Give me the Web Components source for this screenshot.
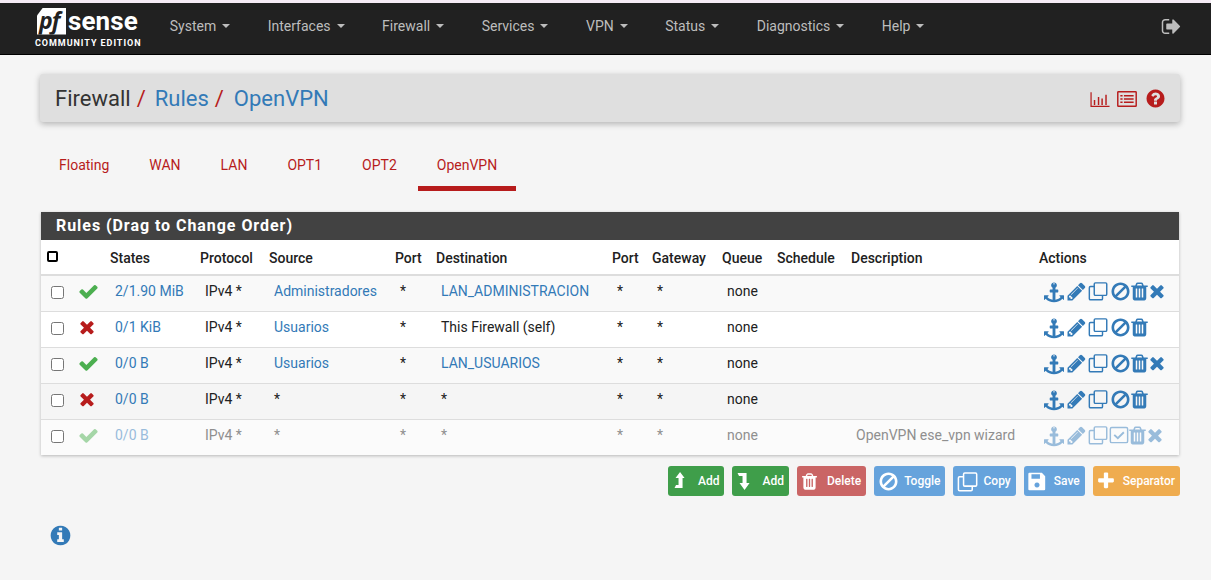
<!DOCTYPE html>
<html lang="en">
<head>
<meta charset="utf-8">
<title>pfSense - Firewall: Rules: OpenVPN</title>
<style>
  html, body { margin: 0; padding: 0; }
  body {
    background: #f5f5f5;
    color: #212121;
    font: 14px/20px Roboto, "Liberation Sans", sans-serif;
    border-top: 3px solid #f6ecf6;
    height: 577px;
    overflow: hidden;
  }
  .wrap { display: flex; flex-direction: column; padding: 19px 31px 0 40px; }
  .rows { --cols: 34px 30px 90px 69px 126px 41px 176px 40px 70px 55px 74px 188px 145px; }
</style>
</head>
<body>
<pf-navbar>
  <pf-nav-item>System</pf-nav-item>
  <pf-nav-item>Interfaces</pf-nav-item>
  <pf-nav-item>Firewall</pf-nav-item>
  <pf-nav-item>Services</pf-nav-item>
  <pf-nav-item>VPN</pf-nav-item>
  <pf-nav-item>Status</pf-nav-item>
  <pf-nav-item>Diagnostics</pf-nav-item>
  <pf-nav-item>Help</pf-nav-item>
</pf-navbar>
<div class="wrap">
  <pf-breadcrumb></pf-breadcrumb>
  <pf-tabs>
    <pf-tab>Floating</pf-tab>
    <pf-tab>WAN</pf-tab>
    <pf-tab>LAN</pf-tab>
    <pf-tab>OPT1</pf-tab>
    <pf-tab>OPT2</pf-tab>
    <pf-tab active>OpenVPN</pf-tab>
  </pf-tabs>
  <pf-panel heading="Rules (Drag to Change Order)" class="rows">
    <pf-rule-head></pf-rule-head>
    <pf-rule-row tint="#f9f9f9" status="ok" states="2/1.90 MiB" source="Administradores" dest="LAN_ADMINISTRACION" dest-link actions="anchor pencil clone ban trash times"></pf-rule-row>
    <pf-rule-row tint="#ffffff" status="no" states="0/1 KiB" source="Usuarios" dest="This Firewall (self)" actions="anchor pencil clone ban trash"></pf-rule-row>
    <pf-rule-row tint="#f9f9f9" status="ok" states="0/0 B" source="Usuarios" dest="LAN_USUARIOS" dest-link actions="anchor pencil clone ban trash times"></pf-rule-row>
    <pf-rule-row tint="#f5f5f5" status="no" states="0/0 B" source="*" plain-source dest="*" actions="anchor pencil clone ban trash"></pf-rule-row>
    <pf-rule-row tint="#fbfbfb" disabled status="ok" states="0/0 B" source="*" plain-source dest="*" desc="OpenVPN ese_vpn wizard" actions="anchor pencil clone check trash times"></pf-rule-row>
  </pf-panel>
  <pf-button-bar>
    <pf-button color="#3f9e4a" icon="levelup" iw="11" is="18" gap="14" rpad="5">Add</pf-button>
    <pf-button color="#3f9e4a" icon="leveldown" iw="11" is="18" gap="14" rpad="5">Add</pf-button>
    <pf-button color="#ca6565" icon="trash" iw="16" is="19" gap="9" rpad="5">Delete</pf-button>
    <pf-button color="#66a3dc" icon="ban" iw="18" is="21" gap="7" rpad="4">Toggle</pf-button>
    <pf-button color="#66a3dc" icon="clone" iw="19" is="21" gap="7" rpad="5">Copy</pf-button>
    <pf-button color="#66a3dc" icon="save" iw="17" is="20" gap="8" rpad="5">Save</pf-button>
    <pf-button color="#efac4f" icon="plus" iw="16" is="20" gap="9" rpad="5">Separator</pf-button>
  </pf-button-bar>
  <pf-info></pf-info>
</div>

<script>
// font-awesome 4 outlines, all in a 1792 box
const ICONS = {
  times: 'M1490 1322q0 40-28 68l-136 136q-28 28-68 28t-68-28l-294-294-294 294q-28 28-68 28t-68-28l-136-136q-28-28-28-68t28-68l294-294-294-294q-28-28-28-68t28-68l136-136q28-28 68-28t68 28l294 294 294-294q28-28 68-28t68 28l136 136q28 28 28 68t-28 68l-294 294 294 294q28 28 28 68z',
  ok: 'M1671 566q0 40-28 68l-724 724-136 136q-28 28-68 28t-68-28l-136-136-362-362q-28-28-28-68t28-68l136-136q28-28 68-28t68 28l294 295 656-657q28-28 68-28t68 28l136 136q28 28 28 68z',
  pencil: 'M491 1536l91-91-235-235-91 91v107h128v128h107zm523-928q0-22-22-22-10 0-17 7l-542 542q-7 7-7 17 0 22 22 22 10 0 17-7l542-542q7-7 7-17zm-54-192l416 416-832 832h-416v-416zm683 96q0 53-37 90l-166 166-416-416 166-165q36-38 90-38 53 0 91 38l235 234q37 39 37 91z',
  trash: 'M704 1376v-704q0-14-9-23t-23-9h-64q-14 0-23 9t-9 23v704q0 14 9 23t23 9h64q14 0 23-9t9-23zm256 0v-704q0-14-9-23t-23-9h-64q-14 0-23 9t-9 23v704q0 14 9 23t23 9h64q14 0 23-9t9-23zm256 0v-704q0-14-9-23t-23-9h-64q-14 0-23 9t-9 23v704q0 14 9 23t23 9h64q14 0 23-9t9-23zm-544-992h448l-48-117q-7-9-17-11h-317q-10 2-17 11zm928 32v64q0 14-9 23t-23 9h-96v948q0 83-47 143.5t-113 60.5h-832q-66 0-113-58.5t-47-141.5v-952h-96q-14 0-23-9t-9-23v-64q0-14 9-23t23-9h309l70-167q15-37 54-63t79-26h320q40 0 79 26t54 63l70 167h309q14 0 23 9t9 23z',
  ban: 'M1440 893q0-161-87-295l-754 753q137 89 297 89 111 0 211.5-43.5t173.5-116.5 116-174.5 43-212.5zm-999 299l755-754q-135-91-300-91-148 0-273 73t-198 199-73 274q0 162 89 299zm1223-299q0 157-61 300t-163.5 246-245 164-298.5 61-298.5-61-245-164-163.5-246-61-300 61-299.5 163.5-245.5 245-164 298.5-61 298.5 61 245 164 163.5 245.5 61 299.5z',
  anchor: 'M960 256q0-26-19-45t-45-19-45 19-19 45 19 45 45 19 45-19 19-45zm832 1056v352q0 22-20 30-8 2-12 2-12 0-23-9l-93-93q-119 143-318.5 226.5t-429.5 83.5-429.5-83.5-318.5-226.5l-93 93q-9 9-23 9-4 0-12-2-20-8-20-30v-352q0-14 9-23t23-9h352q22 0 30 20 8 19-7 35l-100 100q67 91 189.5 153.5t271.5 82.5v-647h-192q-26 0-45-19t-19-45v-128q0-26 19-45t45-19h192v-163q-58-34-93-92.5t-35-128.5q0-106 75-181t181-75 181 75 75 181q0 70-35 128.5t-93 92.5v163h192q26 0 45 19t19 45v128q0 26-19 45t-45 19h-192v647q149-20 271.5-82.5t189.5-153.5l-100-100q-15-16-7-35 8-20 30-20h352q14 0 23 9t9 23z',
  plus: 'M1600 736v192q0 40-28 68t-68 28h-416v416q0 40-28 68t-68 28h-192q-40 0-68-28t-28-68v-416h-416q-40 0-68-28t-28-68v-192q0-40 28-68t68-28h416v-416q0-40 28-68t68-28h192q40 0 68 28t28 68v416h416q40 0 68 28t28 68z',
  question: 'M1024 1376v-192q0-14-9-23t-23-9h-192q-14 0-23 9t-9 23v192q0 14 9 23t23 9h192q14 0 23-9t9-23zm256-672q0-88-55.5-163t-138.5-116-170-41q-243 0-371 213-15 24 8 42l132 100q7 6 19 6 16 0 25-12 53-68 86-92 34-24 86-24 48 0 85.5 26t37.5 59q0 38-20 61t-68 45q-63 28-115.5 86.5t-52.5 125.5v36q0 14 9 23t23 9h192q14 0 23-9t9-23q0-19 21.5-49.5t54.5-49.5q32-18 49-28.5t46-35 44.5-48 28-60.5 12.5-81zm384 192q0 209-103 385.5t-279.5 279.5-385.5 103-385.5-103-279.5-279.5-103-385.5 103-385.5 279.5-279.5 385.5-103 385.5 103 279.5 279.5 103 385.5z',
  info: 'M1152 1376v-160q0-14-9-23t-23-9h-96v-512q0-14-9-23t-23-9h-320q-14 0-23 9t-9 23v160q0 14 9 23t23 9h96v320h-96q-14 0-23 9t-9 23v160q0 14 9 23t23 9h448q14 0 23-9t9-23zm-128-896v-160q0-14-9-23t-23-9h-192q-14 0-23 9t-9 23v160q0 14 9 23t23 9h192q14 0 23-9t9-23zm640 416q0 209-103 385.5t-279.5 279.5-385.5 103-385.5-103-279.5-279.5-103-385.5 103-385.5 279.5-279.5 385.5-103 385.5 103 279.5 279.5 103 385.5z',
  signout: 'M704 1440q0 4 1 20t.5 26.5-3 23.5-10 19.5-20.5 6.5h-320q-119 0-203.5-84.5t-84.5-203.5v-704q0-119 84.5-203.5t203.5-84.5h320q13 0 22.5 9.5t9.5 22.5q0 4 1 20t.5 26.5-3 23.5-10 19.5-20.5 6.5h-320q-66 0-113 47t-47 113v704q0 66 47 113t113 47h312l11.5 1 11.5 3 8 5.5 7 9 2 13.5zm928-544q0 26-19 45l-544 544q-19 19-45 19t-45-19-19-45v-288h-448q-26 0-45-19t-19-45v-384q0-26 19-45t45-19h448v-288q0-26 19-45t45-19 45 19l544 544q19 19 19 45z',
};
const SHAPES = {
  clone: '<g fill="none" stroke="currentColor" stroke-width="130"><rect x="560" y="170" width="1120" height="1120" rx="100"/><path d="M560 500H220a100 100 0 0 0-100 100v980a100 100 0 0 0 100 100h980a100 100 0 0 0 100-100v-290"/></g>',
  check: '<rect x="120" y="230" width="1550" height="1350" rx="130" fill="none" stroke="currentColor" stroke-width="130"/><path d="M470 880l320 310 540-540" fill="none" stroke="currentColor" stroke-width="170"/>',
  save: '<path fill="currentColor" fill-rule="evenodd" d="M220 160h1110l300 300v1170a100 100 0 0 1-100 100H220a100 100 0 0 1-100-100V260a100 100 0 0 1 100-100zM400 300v400h760V300zM896 1020a230 230 0 1 0 .1 0z"/>',
  levelup: '<path fill="currentColor" d="M1100 0L1550 600H1350V1600H550L700 1300H950V600H650z"/>',
  leveldown: '<path fill="currentColor" d="M350 100H1250V1100H1550L1050 1780 550 1100H850V400H500z"/>',
  chart: '<path fill="currentColor" d="M40 300h110v1200h1600v110H40zM340 980h130v450H340zM700 720h130v710H700zM1020 860h130v570h-130zM1370 520h130v910h-130z"/>',
  list: '<rect x="70" y="240" width="1650" height="1310" rx="60" fill="none" stroke="currentColor" stroke-width="130"/><path fill="currentColor" d="M300 530h200v150H300zM620 530h870v150H620zM300 820h200v150H300zM620 820h870v150H620zM300 1110h200v150H300zM620 1110h870v150H620z"/>',
};

class PfIcon extends HTMLElement {
  connectedCallback() {
    const name = this.getAttribute('name');
    const size = this.getAttribute('size') || 20;
    const color = this.getAttribute('color');
    const inner = SHAPES[name] || `<path fill="currentColor" d="${ICONS[name]}"/>`;
    this.attachShadow({ mode: 'open' }).innerHTML = `
      <style>
        :host { display: inline-flex; align-items: center; justify-content: center; ${color ? `color: ${color};` : ''} }
        svg { width: ${size}px; height: ${size}px; display: block; flex: none; overflow: visible; }
      </style>
      <svg viewBox="0 0 1792 1792" aria-hidden="true">${inner}</svg>`;
  }
}

class PfNavbar extends HTMLElement {
  constructor() {
    super();
    this.attachShadow({ mode: 'open' }).innerHTML = `
      <style>
        :host {
          display: flex; align-items: center; height: 52px; box-sizing: border-box;
          background: #212121; border-bottom: 1px solid #000;
          padding: 0 29px 0 35px;
        }
        .logo { display: block; width: 116px; flex: none; }
        .mark { display: flex; align-items: center; height: 27px; margin-top: -1px; }
        .pf {
          width: 29px; height: 27px; margin-left: 2px; background: #fff; color: #212121;
          clip-path: polygon(6px 0, 100% 0, 100% 100%, 0 100%, 0 8px);
          font: italic 700 23px/24px "Open Sans", sans-serif; letter-spacing: -1px; text-indent: 2px;
        }
        .sense { color: #fff; font: 700 26px/26px Roboto, sans-serif; margin-left: 2px; letter-spacing: .1px; }
        .ce { color: #fff; font: 700 9px/11px Roboto, sans-serif; letter-spacing: .95px; white-space: nowrap; margin-top: 3px; }
        .items { display: flex; flex: 1; margin-bottom: 5px; }
        pf-icon { color: #bdbdbd; margin-bottom: 5px; }
      </style>
      <div class="logo">
        <div class="mark"><span class="pf">pf</span><span class="sense">sense</span></div>
        <div class="ce">COMMUNITY EDITION</div>
      </div>
      <div class="items"><slot></slot></div>
      <pf-icon name="signout" size="21"></pf-icon>`;
  }
}

class PfNavItem extends HTMLElement {
  constructor() {
    super();
    this.attachShadow({ mode: 'open' }).innerHTML = `
      <style>
        :host { display: flex; align-items: center; padding: 0 18.75px; color: #bdbdbd; font-size: 14px; }
        i { display: block; width: 0; height: 0; margin-left: 6px; border: 4px solid transparent; border-top-color: currentColor; border-bottom: 0; }
      </style>
      <slot></slot><i></i>`;
  }
}

class PfBreadcrumb extends HTMLElement {
  constructor() {
    super();
    this.attachShadow({ mode: 'open' }).innerHTML = `
      <style>
        :host {
          display: flex; align-items: center; height: 48px; box-sizing: border-box; padding: 1px 14px 0 15px;
          background: #dfdfdf; border-radius: 3px;
          box-shadow: 0 2px 6px rgba(0,0,0,.28);
          font-size: 22px; color: #333;
        }
        .crumbs { flex: 1; display: flex; }
        a { color: #337ab7; margin-left: 9px; }
        a:last-child { margin-left: 10px; }
        b { font-weight: 400; color: #b71c1c; margin-left: 6px; }
        .tools { display: flex; gap: 8px; color: #b71c1c; align-items: center; }
        .chart { margin-right: -1px; }
      </style>
      <div class="crumbs"><span>Firewall</span><b>/</b><a>Rules</a><b>/</b><a>OpenVPN</a></div>
      <div class="tools">
        <pf-icon class="chart" name="chart" size="20"></pf-icon>
        <pf-icon name="list" size="20"></pf-icon>
        <pf-icon name="question" size="21"></pf-icon>
      </div>`;
  }
}

class PfTabs extends HTMLElement {
  constructor() {
    super();
    this.attachShadow({ mode: 'open' }).innerHTML = `
      <style>:host { display: flex; gap: 2px; margin: 23px 0 21px; }</style>
      <slot></slot>`;
  }
}

class PfTab extends HTMLElement {
  constructor() {
    super();
    this.attachShadow({ mode: 'open' }).innerHTML = `
      <style>
        :host { display: block; height: 46px; box-sizing: border-box; padding: 10px 19px 0; color: #b71c1c; font-size: 14px; }
        :host([active]) { border-bottom: 5px solid #b71c1c; }
      </style>
      <slot></slot>`;
  }
}

class PfPanel extends HTMLElement {
  constructor() {
    super();
    this.attachShadow({ mode: 'open' }).innerHTML = `
      <style>
        :host { display: block; margin: 0 1px; background: #fff; box-shadow: 0 1px 3px rgba(0,0,0,.25); }
        h2 {
          margin: 0; height: 28px; box-sizing: border-box; padding: 4px 15px 0; background: #424242; color: #fff;
          font: 700 16px/20px Roboto, sans-serif; letter-spacing: .95px;
        }
      </style>
      <h2></h2><slot></slot>`;
    this.shadowRoot.querySelector('h2').textContent = this.getAttribute('heading');
  }
}

class PfRuleHead extends HTMLElement {
  constructor() {
    super();
    this.attachShadow({ mode: 'open' }).innerHTML = `
      <style>
        :host {
          display: grid; grid-template-columns: var(--cols); height: 36px; box-sizing: border-box;
          border-bottom: 2px solid #ddd; font-weight: 500; color: #212121; background: #fff;
        }
        span { padding: 8px 0 0 5px; white-space: nowrap; }
        .box { display: block; width: 7px; height: 7px; border: 2px solid #000; border-radius: 2px; margin: 11px 0 0 6px; padding: 0; }
      </style>
      <span class="box"></span><span></span>
      <span>States</span><span>Protocol</span><span>Source</span><span>Port</span><span>Destination</span>
      <span>Port</span><span>Gateway</span><span>Queue</span><span>Schedule</span><span>Description</span><span>Actions</span>`;
  }
}

// slot widths keep the action icons on the same x in every row
const ACTION_SLOTS = { anchor: 22, pencil: 22, clone: 22, ban: 22, check: 20, trash: 17, times: 18 };
const ACTION_SIZES = { ban: 21, trash: 21, pencil: 21 };

class PfRuleRow extends HTMLElement {
  connectedCallback() {
    const a = (n) => this.getAttribute(n) || '';
    const ok = a('status') === 'ok';
    const dim = this.hasAttribute('disabled');
    const link = dim ? '#99bcdb' : '#337ab7';
    const statusColor = ok ? (dim ? '#a5d6a7' : '#4caf50') : '#b71c1c';
    const actions = a('actions').split(' ').map((n) =>
      `<pf-icon name="${n}" size="${ACTION_SIZES[n] || 20}" style="width:${ACTION_SLOTS[n]}px"></pf-icon>`).join('');
    const src = this.hasAttribute('plain-source') ? a('source') : `<a>${a('source')}</a>`;
    const dst = this.hasAttribute('dest-link') ? `<a>${a('dest')}</a>` : a('dest');
    this.attachShadow({ mode: 'open' }).innerHTML = `
      <style>
        :host {
          display: grid; grid-template-columns: var(--cols); height: 36px; box-sizing: border-box;
          border-bottom: 1px solid #ddd; background: ${a('tint')}; color: ${dim ? '#8f8f8f' : '#212121'};
        }
        :host(:last-child) { border-bottom: 0; height: 35px; }
        div { padding: 5px 0 0 10px; white-space: nowrap; }
        a { color: ${link}; }
        .cb { padding: 10px 0 0 10px; }
        .cb input { margin: 0; display: block; width: 13px; height: 13px; }
        .st { padding: 5px 0 0 3px; height: 20px; display: flex; align-items: center; }
        .st.x { padding-left: 2px; }
        .act { padding: 5px 0 0 9px; display: flex; align-items: flex-start; color: ${link}; }
        .act pf-icon { height: 20px; }
      </style>
      <div class="cb"><input type="checkbox"></div>
      <div class="st ${ok ? '' : 'x'}"><pf-icon name="${ok ? 'ok' : 'times'}" size="${ok ? 21 : 20}" color="${statusColor}"></pf-icon></div>
      <div><a>${a('states')}</a></div>
      <div>IPv4 *</div>
      <div>${src}</div>
      <div>*</div>
      <div>${dst}</div>
      <div>*</div>
      <div>*</div>
      <div>none</div>
      <div></div>
      <div>${a('desc')}</div>
      <div class="act">${actions}</div>`;
  }
}

class PfButtonBar extends HTMLElement {
  constructor() {
    super();
    this.attachShadow({ mode: 'open' }).innerHTML = `
      <style>:host { display: flex; justify-content: flex-end; gap: 8px; margin-top: 11px; }</style>
      <slot></slot>`;
  }
}

class PfButton extends HTMLElement {
  connectedCallback() {
    const a = (n) => this.getAttribute(n);
    this.attachShadow({ mode: 'open' }).innerHTML = `
      <style>
        :host {
          display: flex; align-items: center; height: 30px; box-sizing: border-box;
          padding: 0 ${a('rpad')}px 0 5px; gap: ${a('gap')}px;
          background: ${a('color')}; color: #fff; border-radius: 3px;
          font: 500 12px/18px Roboto, sans-serif; white-space: nowrap;
        }
        pf-icon { width: ${a('iw')}px; }
      </style>
      <pf-icon name="${a('icon')}" size="${a('is')}"></pf-icon><slot></slot>`;
  }
}

class PfInfo extends HTMLElement {
  constructor() {
    super();
    this.attachShadow({ mode: 'open' }).innerHTML = `
      <style>:host { display: block; margin: 28px 0 0 9px; color: #337ab7; line-height: 0; }</style>
      <pf-icon name="info" size="23"></pf-icon>`;
  }
}

customElements.define('pf-icon', PfIcon);
customElements.define('pf-navbar', PfNavbar);
customElements.define('pf-nav-item', PfNavItem);
customElements.define('pf-breadcrumb', PfBreadcrumb);
customElements.define('pf-tabs', PfTabs);
customElements.define('pf-tab', PfTab);
customElements.define('pf-panel', PfPanel);
customElements.define('pf-rule-head', PfRuleHead);
customElements.define('pf-rule-row', PfRuleRow);
customElements.define('pf-button-bar', PfButtonBar);
customElements.define('pf-button', PfButton);
customElements.define('pf-info', PfInfo);
</script>
</body>
</html>
